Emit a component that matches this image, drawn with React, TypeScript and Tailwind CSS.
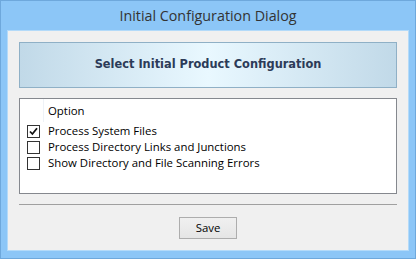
import React, { useState } from "react";

type Option = { label: string; checked: boolean };

const initialOptions: Option[] = [
  { label: "Process System Files", checked: true },
  { label: "Process Directory Links and Junctions", checked: false },
  { label: "Show Directory and File Scanning Errors", checked: false },
];

function CheckBox({ checked }: { checked: boolean }) {
  return (
    <span className="flex h-[13px] w-[13px] items-center justify-center border border-[#333333] bg-white">
      {checked && (
        <svg width="9" height="9" viewBox="0 0 9 9">
          <path d="M1 4.5 L3.4 7 L8 1.2" fill="none" stroke="#111" strokeWidth="1.8" />
        </svg>
      )}
    </span>
  );
}

export default function App() {
  const [options, setOptions] = useState(initialOptions);

  const toggle = (i: number) =>
    setOptions((prev) => prev.map((o, j) => (j === i ? { ...o, checked: !o.checked } : o)));

  return (
    <div
      className="flex h-[259px] w-[416px] flex-col border border-[#6ea8dc] bg-[#8cc6f7]"
      style={{ fontFamily: '"Open Sans", "Noto Sans", sans-serif' }}
    >
      {/* title bar */}
      <div className="flex h-[29px] items-center justify-center pt-[1px] text-[14.3px] text-[#333333]">
        Initial Configuration Dialog
      </div>

      {/* client area */}
      <div className="mx-[6px] flex flex-col border border-[#b3daf9] bg-[#f0f0f0] px-[11px] pt-[11px]">
        <div
          className="flex h-[46px] items-center justify-center border border-[#8fb0c6] text-[11.4px] font-bold text-[#2c3b58]"
          style={{
            fontFamily: '"DejaVu Sans", sans-serif',
            background: "linear-gradient(to right, #c1d9e8, #e9f8ff 50%, #c1d9e8)",
          }}
        >
          Select Initial Product Configuration
        </div>

        <div className="mt-[10px] flex h-[96px] flex-col border border-[#85888e] bg-white text-[11.4px] text-black">
          <div className="flex h-[23px]">
            <div className="w-[24px] border-r border-[#eef2f7]" />
            <div className="flex items-center pl-[4px]">Option</div>
          </div>
          <div className="flex flex-col pt-[1px]">
            {options.map((o, i) => (
              <button
                key={o.label}
                onClick={() => toggle(i)}
                className="flex h-[16px] items-center text-left"
              >
                <span className="ml-[7px] mr-[8px]">
                  <CheckBox checked={o.checked} />
                </span>
                <span>{o.label}</span>
              </button>
            ))}
          </div>
        </div>

        <div className="mt-[10px] h-px bg-[#a0a0a0]" />

        <div className="flex justify-center pb-[11px] pt-[12px]">
          <button
            className="h-[22px] w-[58px] border border-[#adadad] text-[11.4px] text-black"
            style={{ background: "linear-gradient(#f0f0f0, #e5e5e5)" }}
          >
            Save
          </button>
        </div>
      </div>
    </div>
  );
}
